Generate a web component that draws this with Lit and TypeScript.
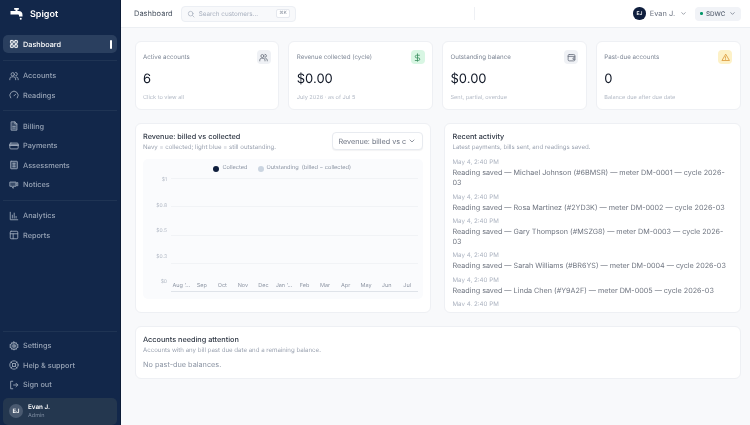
import { LitElement, html, css, svg } from 'lit';
import { customElement } from 'lit/decorators.js';

const icon = (body: unknown, size = 10) => html`<svg width=${size} height=${size} viewBox="0 0 24 24" fill="none" stroke="currentColor" stroke-width="2.2" stroke-linecap="round" stroke-linejoin="round">${body}</svg>`;

const icons = {
  grid: svg`<g fill="currentColor" fill-opacity=".35"><rect x="3.500" y="3.500" width="7" height="7" rx="1.500"/><rect x="13.500" y="3.500" width="7" height="7" rx="1.500"/><rect x="3.500" y="13.500" width="7" height="7" rx="1.500"/><rect x="13.500" y="13.500" width="7" height="7" rx="1.500"/></g>`,
  users: svg`<circle cx="9" cy="8" r="4"/><path d="M2 21v-2a5 5 0 0 1 5-5h4a5 5 0 0 1 5 5v2"/><path d="M16 3.500a4 4 0 0 1 0 8"/><path d="M22 21v-2a5 5 0 0 0-4-4.800"/>`,
  gauge: svg`<path d="M4 19a10 10 0 1 1 16 0"/><path d="M12 14l4-4"/>`,
  file: svg`<path d="M6 2h8l5 5v15H6z" fill="currentColor" fill-opacity=".3"/><path d="M14 2v5h5"/><path d="M9 13h6M9 17h6"/>`,
  card: svg`<rect x="2" y="5" width="20" height="14" rx="2.500"/><path d="M2 10h20" stroke-width="4"/>`,
  assess: svg`<rect x="4" y="3" width="16" height="18" rx="1" fill="currentColor" fill-opacity=".3"/><path d="M12 7v10M9 9h6M9 15h6"/>`,
  notice: svg`<path d="M3 5h14v10H10v5l-3-5H3z" fill="currentColor" fill-opacity=".3"/><path d="M17 8l4-2v8l-4-2"/>`,
  chart: svg`<path d="M3 3v18h18"/><path d="M8 17V10M12.500 17V5M17 17v-4"/>`,
  table: svg`<rect x="3" y="3" width="18" height="18" rx="2"/><path d="M3 9h18M10 9v12"/>`,
  gear: svg`<circle cx="12" cy="12" r="3"/><path fill="currentColor" fill-opacity=".3" d="M12 2l2 3 3.500-1 1 3.500L22 9l-1.500 3L22 15l-3.500 1.500-1 3.500-3.500-1-2 3-2-3-3.500 1-1-3.500L2 15l1.500-3L2 9l3.500-1.500 1-3.500L10 5z"/>`,
  help: svg`<circle cx="12" cy="12" r="10"/><circle cx="12" cy="12" r="4"/><path d="M5 5l4 4M19 5l-4 4M5 19l4-4M19 19l-4-4"/>`,
  out: svg`<path d="M9 3H4v18h5"/><path d="M11 12h10M17 8l4 4-4 4"/>`,
  search: svg`<circle cx="11" cy="11" r="7"/><path d="M21 21l-4.500-4.500"/>`,
  chevron: svg`<path d="M6 9l6 6 6-6"/>`,
  dollar: svg`<path d="M12 2v20"/><path d="M17 6H9.500a3.500 3.500 0 0 0 0 7h5a3.500 3.500 0 0 1 0 7H6"/>`,
  wallet: svg`<rect x="3" y="4" width="18" height="17" rx="3"/><path d="M3 9h18"/><path d="M21 13h-5v4h5"/>`,
  warn: svg`<path d="M12 4L2.500 20h19z"/><path d="M12 10v4M12 17v.01"/>`,
};

const navGroups = [
  [['Dashboard', icons.grid]],
  [['Accounts', icons.users], ['Readings', icons.gauge]],
  [['Billing', icons.file], ['Payments', icons.card], ['Assessments', icons.assess], ['Notices', icons.notice]],
  [['Analytics', icons.chart], ['Reports', icons.table]],
];

const kpis = [
  { label: 'Active accounts', value: '6', note: 'Click to view all', icon: icons.users, tone: 'slate' },
  { label: 'Revenue collected (cycle)', value: '$0.00', note: 'July 2026 · as of Jul 5', icon: icons.dollar, tone: 'green' },
  { label: 'Outstanding balance', value: '$0.00', note: 'Sent, partial, overdue', icon: icons.wallet, tone: 'slate' },
  { label: 'Past-due accounts', value: '0', note: 'Balance due after due date', icon: icons.warn, tone: 'amber' },
];

// the last entry only peeks out above the scroll edge
const activity = [
  'Reading saved — Michael Johnson (#6BMSR) — meter DM-0001 — cycle 2026-03',
  'Reading saved — Rosa Martinez (#2YD3K) — meter DM-0002 — cycle 2026-03',
  'Reading saved — Gary Thompson (#MSZG8) — meter DM-0003 — cycle 2026-03',
  'Reading saved — Sarah Williams (#BR6YS) — meter DM-0004 — cycle 2026-03',
  'Reading saved — Linda Chen (#Y9A2F) — meter DM-0005 — cycle 2026-03',
  '',
];

const months = ['Aug ’...', 'Sep', 'Oct', 'Nov', 'Dec', 'Jan ’...', 'Feb', 'Mar', 'Apr', 'May', 'Jun', 'Jul'];
const ticks = ['$1', '$0.8', '$0.5', '$0.3', '$0'];

@customElement('app-root')
export class AppRoot extends LitElement {
  static styles = css`
    :host {
      display: flex;
      width: 750px;
      height: 425px;
      overflow: hidden;
      background: #f8f9fb;
      color: #1f2937;
      font-family: Inter, 'Liberation Sans', sans-serif;
      text-rendering: geometricPrecision;
      filter: blur(0.25px);
    }
    .side {
      width: 121px;
      flex: none;
      box-sizing: border-box;
      display: flex;
      flex-direction: column;
      background: #12274a;
      border-right: 1px solid #0c1b36;
      padding: 0 3px 0.500px;
    }
    .brand {
      height: 28px;
      display: flex;
      align-items: center;
      gap: 6px;
      padding-left: 7px;
      color: #fff;
      font-size: 9px;
      font-weight: 600;
    }
    .group {
      padding: 0 0 5px;
      margin-bottom: 5.500px;
      border-bottom: 1px solid #1f3454;
      display: flex;
      flex-direction: column;
    }
    .top { padding-top: 7px; padding-bottom: 6.500px; }
    .group.last { border-bottom: 0; }
    .item {
      height: 19.500px;
      display: flex;
      align-items: center;
      gap: 4px;
      padding-left: 6px;
      color: #98a4b6;
      font-size: 7.300px;
      font-weight: 500;
    }
    .item.active {
      height: 18px;
      background: #2a3f5f;
      border-radius: 5px;
      color: #fff;
      position: relative;
    }
    .item.active::after {
      content: '';
      position: absolute;
      right: 5px;
      top: 5px;
      width: 2px;
      height: 9px;
      background: #fff;
      border-radius: 1px;
    }
    .spacer { flex: 1; }
    .bottom {
      border-top: 1px solid #1f3454;
      padding-top: 4px;
      display: flex;
      flex-direction: column;
    }
    .user {
      height: 27px;
      margin-top: 3px;
      background: #24374f;
      border-radius: 5px;
      display: flex;
      align-items: center;
      gap: 5px;
      padding-left: 6px;
    }
    .avatar {
      width: 14px;
      height: 14px;
      border-radius: 50%;
      background: #4a5a70;
      color: #fff;
      font-size: 6px;
      font-weight: 600;
      display: flex;
      align-items: center;
      justify-content: center;
    }
    .user b { display: block; color: #fff; font-size: 6.300px; font-weight: 600; line-height: 8px; }
    .user span { display: block; color: #7d8ba0; font-size: 5.500px; line-height: 8px; margin-top: 1px; }

    .main { flex: 1; min-width: 0; display: flex; flex-direction: column; }
    .bar {
      height: 28px;
      flex: none;
      box-sizing: border-box;
      background: #fff;
      border-bottom: 1px solid #eceff3;
      display: flex;
      align-items: center;
      padding: 0 9.500px 0 13px;
      font-size: 7.500px;
      color: #4b5563;
    }
    .search {
      width: 115px;
      height: 16px;
      box-sizing: border-box;
      margin-left: 8px;
      border: 1px solid #eceff4;
      background: #f8f9fb;
      border-radius: 4px;
      display: flex;
      align-items: center;
      gap: 4px;
      padding: 0 5px;
      color: #a9b1bf;
      font-size: 6.300px;
    }
    .search kbd {
      margin-left: auto;
      font: inherit;
      font-size: 4.500px;
      border: 1px solid #e5e8ee;
      border-radius: 2px;
      background: #fff;
      padding: 1px 2px;
      color: #7c8594;
    }
    .rule { width: 1px; height: 13px; background: #eef0f4; margin-left: 178.500px; }
    .me { margin-left: auto; display: flex; align-items: center; gap: 4px; font-size: 7.400px; color: #6b7280; }
    .me .dot {
      width: 12.500px; height: 12.500px; border-radius: 50%;
      background: #0f1e3d; color: #fff; font-size: 5px; font-weight: 600;
      display: flex; align-items: center; justify-content: center;
    }
    .me svg { margin-left: 0.500px; }
    .org {
      margin-left: 8.500px;
      height: 14px;
      padding: 0 5px;
      background: #f1f3f7;
      border-radius: 4px;
      display: flex;
      align-items: center;
      gap: 3px;
      font-size: 6.300px;
      font-weight: 500;
      color: #5b6474;
    }
    .org i { width: 2.500px; height: 2.500px; border-radius: 50%; background: #059669; margin-right: 0.500px; }

    .content {
      padding: 13px 9.500px 0 13.500px;
      display: flex;
      flex-direction: column;
      gap: 13px;
    }
    .card {
      background: #fff;
      border: 1px solid #eef0f4;
      border-radius: 6px;
      box-sizing: border-box;
    }
    .kpis { display: grid; grid-template-columns: repeat(4, 1fr); gap: 9px; }
    .kpi {
      height: 69px;
      padding: 8px 7.500px 0;
      display: flex;
      flex-direction: column;
      position: relative;
    }
    .kpi label { font-size: 6.200px; color: #7c8594; line-height: 16px; }
    .kpi strong { font-size: 13px; font-weight: 400; color: #111827; line-height: 16px; margin-top: 4.500px; }
    .kpi small { font-size: 5.600px; color: #b3bac6; margin-top: 7.500px; line-height: 8px; }
    .badge {
      position: absolute;
      right: 7.500px;
      top: 8px;
      width: 14px;
      height: 14px;
      border-radius: 4px;
      display: flex;
      align-items: center;
      justify-content: center;
    }
    .slate { background: #eff1f5; color: #6b7280; }
    .green { background: #d8f6e3; color: #3f9163; }
    .amber { background: #fdf1c7; color: #dc9a3a; }

    .row { display: grid; grid-template-columns: 1fr 1fr; gap: 13px; }
    .panel { height: 190px; padding: 8px 7.500px; position: relative; }
    h3 { margin: 0; font-size: 7.300px; font-weight: 500; color: #2f3744; line-height: 10px; }
    .sub { font-size: 6.100px; color: #9aa2b0; line-height: 9px; margin-top: 1px; }
    .select {
      position: absolute;
      right: 7.500px;
      top: 8px;
      width: 91px;
      height: 18px;
      box-sizing: border-box;
      border: 1px solid #e8ebf0;
      border-radius: 4px;
      box-shadow: 0 1px 1px rgba(15, 23, 42, .05);
      background: #fff;
      display: flex;
      align-items: center;
      justify-content: space-between;
      padding: 0 6px;
      font-size: 7.200px;
      color: #6b7280;
      white-space: nowrap;
    }
    .select span { width: 67px; overflow: hidden; }
    .plot {
      margin-top: 7px;
      height: 139.500px;
      box-sizing: border-box;
      background: #fafbfd;
      border-radius: 5px;
      padding: 5px 5px 0 0;
      display: flex;
      flex-direction: column;
    }
    .legend {
      display: flex;
      justify-content: center;
      align-items: center;
      gap: 3px;
      font-size: 5.600px;
      color: #8a93a2;
      line-height: 9px;
      padding-right: 3px;
    }
    .legend i { width: 6px; height: 6px; border-radius: 50%; margin-left: 7px; }
    .chart { display: flex; margin-top: 1.500px; }
    .ylabels { width: 24px; flex: none; padding-top: 2.500px; }
    .ylabels div {
      height: 25.600px;
      text-align: right;
      font-size: 5px;
      color: #b3bac6;
      line-height: 7px;
    }
    .area { flex: 1; margin-left: 4px; margin-top: 3px; }
    .line { height: 28.600px; box-sizing: border-box; border-top: 1px solid #f1f3f6; }
    .axis {
      display: grid;
      grid-template-columns: repeat(12, 1fr);
      align-items: end;
      height: 28.600px;
      box-sizing: border-box;
      border-top: 1px solid #f1f3f6;
      border-bottom: 1px solid #dfe3e9;
      font-size: 5.500px;
      color: #8f97a5;
      text-align: center;
      line-height: 9px;
    }
    .feed {
      margin-top: 6px;
      height: 148px;
      overflow: hidden;
    }
    .entry { margin-bottom: 4px; }
    .entry time { display: block; font-size: 6.200px; color: #adb4c1; line-height: 10px; }
    .entry p { margin: 0; font-size: 7.200px; color: #6f7580; line-height: 10.250px; }
    .attention { height: 53px; padding: 8px 7.500px; }
    .attention p { margin: 5px 0 0; font-size: 7.300px; color: #8a93a2; line-height: 10px; }
  `;

  private renderItem(label: unknown, glyph: unknown, active = false) {
    return html`<div class="item ${active ? 'active' : ''}">${icon(glyph)}<span>${label}</span></div>`;
  }

  render() {
    return html`
      <aside class="side">
        <div class="brand">
          <svg width="14" height="12" viewBox="0 0 28 24" fill="#fff">
            <rect x="8" y="0" width="10" height="3.500" rx="1.500"/>
            <rect x="11" y="2" width="4" height="5"/>
            <path d="M1 6h16a8 8 0 0 1 8 8v3h-7v-2a2 2 0 0 0-2-2H1z"/>
            <circle cx="21.500" cy="21.500" r="2"/>
          </svg>
          <span>Spigot</span>
        </div>
        ${navGroups.map((group, i) => html`
          <div class="group ${i === 0 ? 'top' : ''} ${i === navGroups.length - 1 ? 'last' : ''}">
            ${group.map(([label, glyph]) => this.renderItem(label, glyph, label === 'Dashboard'))}
          </div>`)}
        <div class="spacer"></div>
        <div class="bottom">
          ${this.renderItem('Settings', icons.gear)}
          ${this.renderItem('Help & support', icons.help)}
          ${this.renderItem('Sign out', icons.out)}
        </div>
        <div class="user">
          <div class="avatar">EJ</div>
          <div><b>Evan J.</b><span>Admin</span></div>
        </div>
      </aside>
      <div class="main">
        <header class="bar">
          <span>Dashboard</span>
          <div class="search">${icon(icons.search, 8)}<span>Search customers...</span><kbd>⌘K</kbd></div>
          <div class="rule"></div>
          <div class="me"><div class="dot">EJ</div>Evan J. ${icon(icons.chevron, 7)}</div>
          <div class="org"><i></i>SDWC ${icon(icons.chevron, 7)}</div>
        </header>
        <div class="content">
          <section class="kpis">
            ${kpis.map(k => html`
              <div class="card kpi">
                <label>${k.label}</label>
                <strong>${k.value}</strong>
                <small>${k.note}</small>
                <div class="badge ${k.tone}">${icon(k.icon, 9)}</div>
              </div>`)}
          </section>
          <section class="row">
            <div class="card panel">
              <h3>Revenue: billed vs collected</h3>
              <div class="sub">Navy = collected; light blue = still outstanding.</div>
              <div class="select"><span>Revenue: billed vs collected</span>${icon(icons.chevron, 8)}</div>
              <div class="plot">
                <div class="legend">
                  <i style="background:#0f1e3d"></i>Collected
                  <i style="background:#cbd5e1"></i>Outstanding&nbsp; (billed − collected)
                </div>
                <div class="chart">
                  <div class="ylabels">${ticks.map(t => html`<div>${t}</div>`)}</div>
                  <div class="area">
                    <div class="line"></div>
                    <div class="line"></div>
                    <div class="line"></div>
                    <div class="axis">${months.map(m => html`<span>${m}</span>`)}</div>
                  </div>
                </div>
              </div>
            </div>
            <div class="card panel">
              <h3>Recent activity</h3>
              <div class="sub">Latest payments, bills sent, and readings saved.</div>
              <div class="feed">
                ${activity.map(a => html`
                  <div class="entry"><time>May 4, 2:40 PM</time>${a ? html`<p>${a}</p>` : ''}</div>`)}
              </div>
            </div>
          </section>
          <section class="card attention">
            <h3>Accounts needing attention</h3>
            <div class="sub">Accounts with any bill past due date and a remaining balance.</div>
            <p>No past-due balances.</p>
          </section>
        </div>
      </div>
    `;
  }
}
